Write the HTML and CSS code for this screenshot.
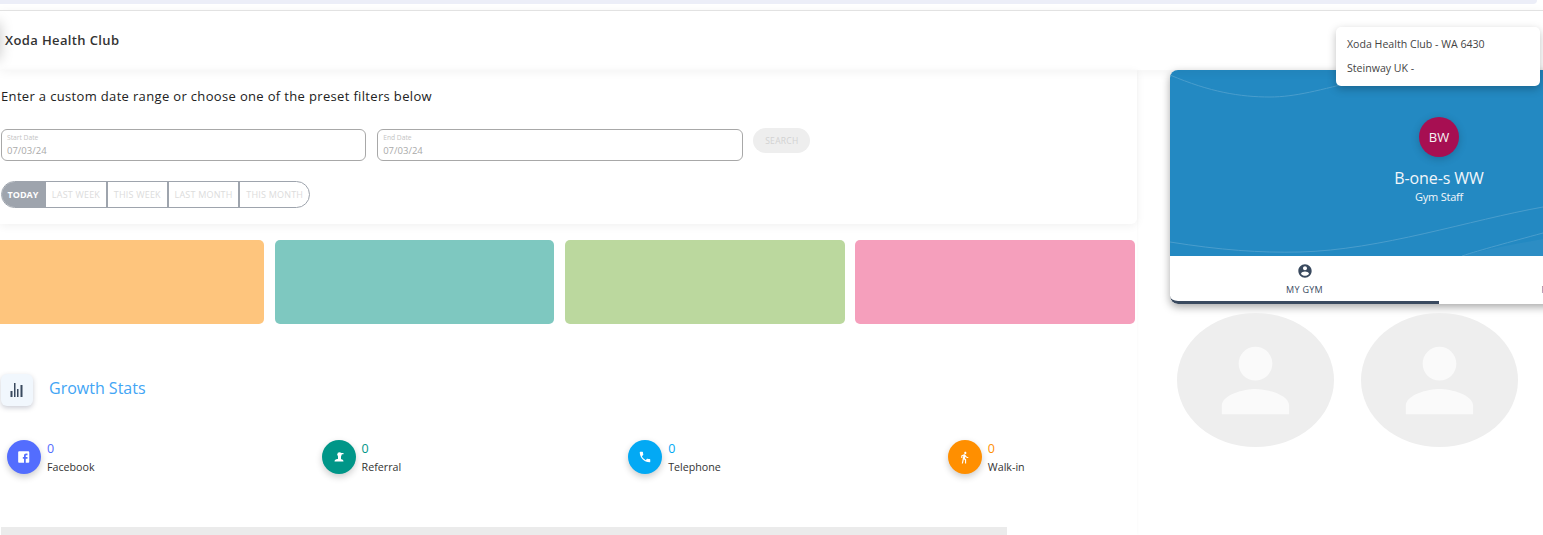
FILE: index.html
```html
<!DOCTYPE html>
<html lang="en">
<head>
    <meta charset="UTF-8">
    <meta name="viewport" content="width=device-width, initial-scale=1.0">
    <title>Xoda Health Club</title>
    <link rel="stylesheet" href="styles.css">
</head>
<body>
    <div class="top_strip"></div>

    <div class="header">
        <span class="club_name">Xoda Health Club</span>
        <div class="club_menu">
            <div class="club_option">Xoda Health Club - WA 6430</div>
            <div class="club_option">Steinway UK -</div>
        </div>
    </div>

    <div class="main">
        <div class="content">
            <div class="filter">
                <div class="filter_title">Enter a custom date range or choose one of the preset filters below</div>
                <div class="date_row">
                    <div class="date_field">
                        <span class="date_label">Start Date</span>
                        <span class="date_value">07/03/24</span>
                    </div>
                    <div class="date_field">
                        <span class="date_label">End Date</span>
                        <span class="date_value">07/03/24</span>
                    </div>
                    <div class="search_btn">SEARCH</div>
                </div>
                <div class="presets">
                    <div class="preset active">TODAY</div>
                    <div class="preset">LAST WEEK</div>
                    <div class="preset">THIS WEEK</div>
                    <div class="preset">LAST MONTH</div>
                    <div class="preset">THIS MONTH</div>
                </div>
            </div>

            <div class="tiles">
                <div class="tile orange"></div>
                <div class="tile teal"></div>
                <div class="tile green"></div>
                <div class="tile pink"></div>
            </div>

            <div class="growth_head">
                <div class="growth_icon">
                    <svg width="14" height="16" viewBox="0 0 14 16" fill="#3a4a5f">
                        <rect x="0.500" y="9" width="2" height="6"/>
                        <rect x="4" y="1" width="1.500" height="14"/>
                        <rect x="7" y="7" width="1.500" height="8"/>
                        <rect x="10.500" y="3" width="2" height="12"/>
                    </svg>
                </div>
                <span class="growth_title">Growth Stats</span>
            </div>

            <div class="stats">
                <div class="stat">
                    <div class="stat_icon bg_blue">
                        <svg width="14" height="14" viewBox="0 0 24 24" fill="#fff"><path d="M20 2H4c-1.1 0-2 .9-2 2v16c0 1.1.9 2 2 2h8v-7h-2v-3h2V9.5C12 7.57 13.57 6 15.5 6H18v3h-2c-.55 0-1 .45-1 1v2h3v3h-3v7h4c1.1 0 2-.9 2-2V4c0-1.1-.9-2-2-2z"/></svg>
                    </div>
                    <div>
                        <div class="stat_value c_blue">0</div>
                        <div class="stat_label">Facebook</div>
                    </div>
                </div>
                <div class="stat">
                    <div class="stat_icon bg_teal">
                        <svg width="12" height="12" viewBox="0 0 24 24" fill="#fff"><circle cx="13" cy="7" r="4.500"/><path d="M15 4h6v2.500h-6zM10 10h6v7h-6zM3 21c0-3.500 3.500-5.500 9-5.500s9 2 9 5.500z"/></svg>
                    </div>
                    <div>
                        <div class="stat_value c_teal">0</div>
                        <div class="stat_label">Referral</div>
                    </div>
                </div>
                <div class="stat">
                    <div class="stat_icon bg_sky">
                        <svg width="14" height="14" viewBox="0 0 24 24" fill="#fff"><path d="M6.620 10.790c1.440 2.830 3.760 5.140 6.590 6.590l2.200-2.200c.27-.27.67-.36 1.020-.24 1.120.37 2.330.57 3.570.57.55 0 1 .45 1 1V20c0 .55-.45 1-1 1-9.390 0-17-7.610-17-17 0-.55.45-1 1-1h3.500c.55 0 1 .45 1 1 0 1.250.2 2.450.57 3.570.11.35.03.74-.25 1.020l-2.200 2.200z"/></svg>
                    </div>
                    <div>
                        <div class="stat_value c_sky">0</div>
                        <div class="stat_label">Telephone</div>
                    </div>
                </div>
                <div class="stat">
                    <div class="stat_icon bg_orange">
                        <svg width="13" height="13" viewBox="0 0 24 24" fill="#fff"><path d="M13.500 5.500c1.100 0 2-.9 2-2s-.9-2-2-2-2 .9-2 2 .9 2 2 2zM9.800 8.900L7 23h2.100l1.800-8 2.100 2v6h2v-7.500l-2.100-2 .6-3C14.800 12 16.800 13 19 13v-2c-1.900 0-3.500-1-4.300-2.400l-1-1.600c-.4-.6-1-1-1.700-1-.3 0-.5.1-.8.1L6 8.300V13h2V9.600l1.800-.7"/></svg>
                    </div>
                    <div>
                        <div class="stat_value c_orange">0</div>
                        <div class="stat_label">Walk-in</div>
                    </div>
                </div>
            </div>

            <div class="bottom_bar"></div>
        </div>

        <div class="side">
            <div class="profile">
                <div class="hero">
                    <svg class="hero_waves" width="538" height="186" viewBox="0 0 538 186" fill="none">
                        <path d="M292 186C340 172 440 160 538 138V186z" fill="#2c8dc4"/>
                        <path d="M0 5C40 22 70 27 100 27C125 27 150 20 190 10" stroke="#4a9dcc"/>
                        <path d="M0 172C50 180 90 183 130 182C210 180 300 150 373 137" stroke="#4a9dcc"/>
                        <path d="M292 186C310 180 340 172 373 163" stroke="#4a9dcc"/>
                    </svg>
                    <div class="hero_inner">
                        <div class="avatar">BW</div>
                        <div class="profile_name">B-one-s WW</div>
                        <div class="profile_role">Gym Staff</div>
                    </div>
                </div>
                <div class="tabs">
                    <div class="tab selected">
                        <svg width="16" height="16" viewBox="0 0 24 24" fill="#3a4a5f"><path d="M12 2C6.480 2 2 6.480 2 12s4.480 10 10 10 10-4.480 10-10S17.520 2 12 2zm0 3c1.660 0 3 1.340 3 3s-1.340 3-3 3-3-1.340-3-3 1.340-3 3-3zm0 14.200c-2.500 0-4.710-1.280-6-3.220.03-1.990 4-3.080 6-3.080 1.990 0 5.970 1.090 6 3.080-1.290 1.940-3.500 3.220-6 3.220z"/></svg>
                        <span class="tab_label">MY GYM</span>
                    </div>
                    <div class="tab">
                        <svg width="16" height="16" viewBox="0 0 24 24" fill="#3a4a5f"><circle cx="12" cy="12" r="10"/></svg>
                        <span class="tab_label tab_next">PREFERENCES</span>
                    </div>
                </div>
            </div>

            <div class="placeholders">
                <div class="placeholder">
                    <svg width="101" height="101" viewBox="0 0 24 24" fill="#fafafa"><path d="M12 12c2.210 0 4-1.790 4-4s-1.790-4-4-4-4 1.790-4 4 1.790 4 4 4zm0 2c-2.670 0-8 1.340-8 4v2h16v-2c0-2.660-5.330-4-8-4z"/></svg>
                </div>
                <div class="placeholder">
                    <svg width="101" height="101" viewBox="0 0 24 24" fill="#fafafa"><path d="M12 12c2.210 0 4-1.790 4-4s-1.790-4-4-4-4 1.790-4 4 1.790 4 4 4zm0 2c-2.670 0-8 1.340-8 4v2h16v-2c0-2.660-5.330-4-8-4z"/></svg>
                </div>
            </div>
        </div>
    </div>
</body>
</html>
```

FILE: styles.css
```css
*{
    margin: 0;
    padding: 0;
    box-sizing: border-box;
}

html,body{
    height: 100%;
    overflow: hidden;
}

body{
    background-color: #fff;
    font-family: "Open Sans", "Liberation Sans", sans-serif;
    color: #333;
}

.top_strip{
    height: 4px;
    margin-right: 6px;
    background-color: #eceef8;
    border-bottom-right-radius: 6px;
}

.header{
    height: 60px;
    margin-top: 6px;
    padding: 0 0 2px 5px;
    display: flex;
    align-items: center;
    border-top: 1px solid #e2e2e2;
    box-shadow: 0 2px 10px rgba(0, 0, 0, 0.05);
    position: relative;
    z-index: 1;
}

.header::before{
    content: "";
    position: absolute;
    left: -24px;
    top: 12px;
    width: 24px;
    height: 36px;
    box-shadow: 0 0 14px rgba(0, 0, 0, 0.22);
}

.club_name{
    font-size: 13px;
    font-weight: 600;
    line-height: 18px;
    letter-spacing: 0.370px;
    color: #333;
}

.club_menu{
    position: absolute;
    left: 1336px;
    top: 16px;
    width: 204px;
    height: 59px;
    padding-top: 5px;
    background-color: #fff;
    border-radius: 5px;
    box-shadow: 0 3px 8px rgba(0, 0, 0, 0.25);
    z-index: 5;
}

.club_option{
    height: 24px;
    padding-left: 11px;
    font-size: 10.600px;
    line-height: 24px;
    color: #444;
}

.main{
    display: flex;
}

.content{
    width: 1137px;
    flex-shrink: 0;
    height: 465px;
    box-shadow: 1px 0 3px rgba(0, 0, 0, 0.02);
}

.filter{
    height: 154px;
    padding: 16px 0 0 1px;
    border-radius: 0 0 6px 0;
    box-shadow: 0 2px 10px rgba(0, 0, 0, 0.06);
}

.filter_title{
    font-size: 13px;
    font-weight: 500;
    line-height: 20px;
    letter-spacing: 0.340px;
    color: #222;
}

.date_row{
    margin-top: 23px;
    display: flex;
    align-items: flex-start;
}

.date_field{
    width: 365.400px;
    height: 32px;
    margin-right: 10.800px;
    padding: 3px 5px 0;
    border: 1px solid #a8a8a8;
    border-radius: 6px;
    display: flex;
    flex-direction: column;
}

.date_label{
    font-size: 6.700px;
    line-height: 9px;
    color: #c4c4c4;
}

.date_value{
    font-size: 9.500px;
    line-height: 13px;
    margin-top: 2px;
    color: #aaa;
}

.search_btn{
    width: 57px;
    height: 25px;
    margin-top: -1px;
    background-color: #eee;
    border-radius: 13px;
    font-size: 8.500px;
    line-height: 25px;
    text-align: center;
    letter-spacing: 0.300px;
    color: #d2d2d2;
}

.presets{
    width: 309px;
    height: 27px;
    margin-top: 20px;
    display: flex;
    border: 1px solid #9ea4ad;
    border-radius: 14px;
    overflow: hidden;
}

.preset{
    flex: 1 1 auto;
    border-left: 2px solid #9ea4ad;
    font-size: 9px;
    line-height: 25px;
    letter-spacing: 0.200px;
    text-align: center;
    color: #dcdcdc;
}

.preset.active{
    flex: 0 0 42px;
    border-left: 0;
    background-color: #9ea4ad;
    color: #fff;
    font-weight: 700;
    letter-spacing: 0;
}

.tiles{
    margin: 16px 0 0 -15.600px;
    display: flex;
    gap: 10.600px;
}

.tile{
    width: 279.700px;
    height: 84px;
    border-radius: 5px;
}

.orange{
    background-color: #fec57d;
}

.teal{
    background-color: #7ec8c0;
}

.green{
    background-color: #bbd89e;
}

.pink{
    background-color: #f59fbc;
}

.growth_head{
    margin: 50px 0 0 1px;
    display: flex;
    align-items: center;
}

.growth_icon{
    width: 32px;
    height: 32px;
    display: flex;
    align-items: center;
    justify-content: center;
    background-color: #f1f7fd;
    border-radius: 6px;
    box-shadow: 0 2px 5px rgba(50, 60, 90, 0.25);
}

.growth_title{
    margin: 0 0 4px 16px;
    font-size: 16px;
    line-height: 22px;
    color: #42a5f5;
}

.stats{
    margin-top: 34px;
    padding-left: 7px;
    display: flex;
    gap: 227px;
}

.stat{
    display: flex;
}

.stat_icon{
    width: 34px;
    height: 34px;
    margin-right: 6px;
    display: flex;
    align-items: center;
    justify-content: center;
    border-radius: 50%;
    box-shadow: 0 3px 7px rgba(0, 0, 0, 0.2);
}

.stat_value{
    font-size: 12.500px;
    line-height: 18px;
}

.stat_label{
    font-size: 10.700px;
    line-height: 18px;
    color: #333;
}

.bg_blue{
    background-color: #536dfe;
}

.bg_teal{
    background-color: #009688;
}

.bg_sky{
    background-color: #03a9f4;
}

.bg_orange{
    background-color: #ff8f00;
}

.c_blue{
    color: #536dfe;
}

.c_teal{
    color: #009688;
}

.c_sky{
    color: #03a9f4;
}

.c_orange{
    color: #ff8f00;
}

.bottom_bar{
    width: 1006px;
    height: 8px;
    margin: 51px 0 0 1px;
    background-color: #ebebeb;
}

.side{
    margin-left: 33px;
    flex-shrink: 0;
    width: 538px;
}

.profile{
    height: 234px;
    border-radius: 8px;
    overflow: hidden;
    background-color: #fff;
    box-shadow: 0 3px 8px rgba(0, 0, 0, 0.35);
}

.hero{
    height: 186px;
    background-color: #2389c2;
    position: relative;
}

.hero_waves{
    position: absolute;
    left: 0;
    top: 0;
}

.hero_inner{
    position: relative;
    padding-top: 47px;
    display: flex;
    flex-direction: column;
    align-items: center;
}

.avatar{
    width: 40px;
    height: 40px;
    background-color: #a70f52;
    border-radius: 50%;
    box-shadow: 0 2px 8px rgba(0, 0, 0, 0.2);
    font-size: 13px;
    font-weight: 500;
    line-height: 40px;
    text-align: center;
    color: #f5f5f5;
}

.profile_name{
    margin-top: 9px;
    font-size: 16px;
    font-weight: 500;
    line-height: 24px;
    letter-spacing: -0.100px;
    color: #f2f6fa;
}

.profile_role{
    font-size: 11px;
    line-height: 14px;
    font-weight: 500;
    letter-spacing: -0.200px;
    color: #f2f6fa;
}

.tabs{
    height: 48px;
    display: flex;
}

.tab{
    width: 50%;
    padding-top: 7px;
    display: flex;
    flex-direction: column;
    align-items: center;
}

.tab.selected{
    border-bottom: 3px solid #3a4a5f;
    border-bottom-left-radius: 8px;
}

.tab_label{
    margin-top: 4px;
    font-size: 9px;
    line-height: 14px;
    font-weight: 500;
    letter-spacing: 0.300px;
    color: #3a4a5f;
}

.tab_next{
    letter-spacing: 0.500px;
    color: #1c5f9c;
}

.placeholders{
    margin: 9px 0 0 7px;
    display: flex;
    gap: 27px;
}

.placeholder{
    width: 157px;
    height: 134px;
    display: flex;
    align-items: center;
    justify-content: center;
    background-color: #eee;
    border-radius: 50%;
}
```
